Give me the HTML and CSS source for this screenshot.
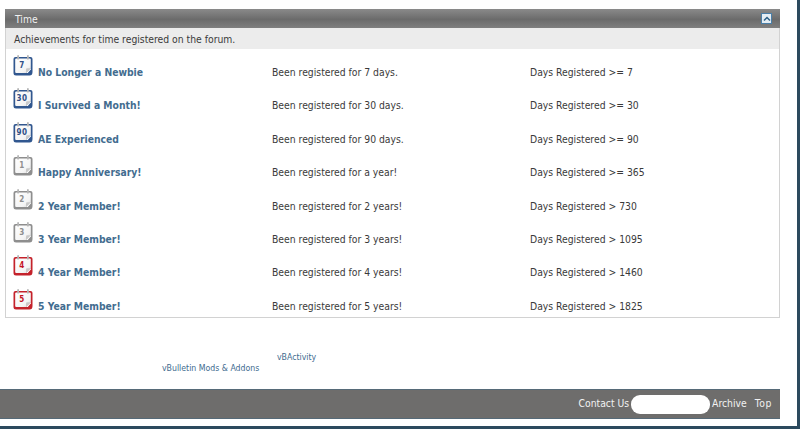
FILE: index.html
```html
<!DOCTYPE html>
<html lang="en">
<head>
<meta charset="utf-8">
<title>Achievements</title>
<link rel="stylesheet" href="styles.css">
</head>
<body>
<svg class="defs" width="0" height="0" aria-hidden="true">
  <defs>
    <linearGradient id="face" x1="0" y1="0" x2="1" y2="1">
      <stop offset="0" stop-color="#fff"/>
      <stop offset=".7" stop-color="#f4f4f4"/>
      <stop offset="1" stop-color="#d8d8d8"/>
    </linearGradient>
  </defs>
  <symbol id="cal" viewBox="0 0 20 21">
    <path d="M2.500 2H17.500Q19.500 2 19.500 4V17Q19.500 20.500 16.500 20.500H3Q.5 20.500 .5 18V4Q.5 2 2.500 2Z" fill="currentColor"/>
    <path d="M3.200 3.400H16.800Q17.800 3.400 17.800 4.400V13L13 18H3.200Q2.200 18 2.200 17V4.400Q2.200 3.400 3.200 3.400Z" fill="url(#face)"/>
    <path d="M13 18L17.800 13V14.500L14.800 18Z" fill="#fff"/>
    <path d="M13 18V14.400Q13 13.200 14.200 13.200H17.600Z" fill="#c9c9c9"/>
    <rect x="4.200" y="0" width="1.800" height="4.600" rx=".9" fill="#b5b5b5"/>
    <rect x="14" y="0" width="1.800" height="4.600" rx=".9" fill="#b5b5b5"/>
  </symbol>
</svg>
<main class="page">
  <section class="block">
    <header class="block-head">
      <h2 class="block-title">Time</h2>
      <span class="collapse"><svg viewBox="0 0 10 8" width="8" height="6"><path d="M1 6L5 2L9 6" fill="none" stroke="#2a5f86" stroke-width="2"/></svg></span>
    </header>
    <p class="block-desc">Achievements for time registered on the forum.</p>
    <div class="rows">
      <div class="row"><div class="name blue"><span class="badge"><svg class="cal"><use href="#cal"/></svg><b class="num">7</b></span><a href="#">No Longer a Newbie</a></div><div>Been registered for 7 days.</div><div>Days Registered &gt;= 7</div></div>
      <div class="row"><div class="name blue"><span class="badge"><svg class="cal"><use href="#cal"/></svg><b class="num">30</b></span><a href="#">I Survived a Month!</a></div><div>Been registered for 30 days.</div><div>Days Registered &gt;= 30</div></div>
      <div class="row"><div class="name blue"><span class="badge"><svg class="cal"><use href="#cal"/></svg><b class="num">90</b></span><a href="#">AE Experienced</a></div><div>Been registered for 90 days.</div><div>Days Registered &gt;= 90</div></div>
      <div class="row"><div class="name grey"><span class="badge"><svg class="cal"><use href="#cal"/></svg><b class="num">1</b></span><a href="#">Happy Anniversary!</a></div><div>Been registered for a year!</div><div>Days Registered &gt;= 365</div></div>
      <div class="row"><div class="name grey"><span class="badge"><svg class="cal"><use href="#cal"/></svg><b class="num">2</b></span><a href="#">2 Year Member!</a></div><div>Been registered for 2 years!</div><div>Days Registered &gt; 730</div></div>
      <div class="row"><div class="name grey"><span class="badge"><svg class="cal"><use href="#cal"/></svg><b class="num">3</b></span><a href="#">3 Year Member!</a></div><div>Been registered for 3 years!</div><div>Days Registered &gt; 1095</div></div>
      <div class="row"><div class="name red"><span class="badge"><svg class="cal"><use href="#cal"/></svg><b class="num">4</b></span><a href="#">4 Year Member!</a></div><div>Been registered for 4 years!</div><div>Days Registered &gt; 1460</div></div>
      <div class="row"><div class="name red"><span class="badge"><svg class="cal"><use href="#cal"/></svg><b class="num">5</b></span><a href="#">5 Year Member!</a></div><div>Been registered for 5 years!</div><div>Days Registered &gt; 1825</div></div>
    </div>
  </section>
  <div class="credits">
    <a class="credit-main" href="#">vBulletin Mods &amp; Addons</a>
    <a class="credit-side" href="#">vBActivity</a>
  </div>
  <footer class="foot">
    <a href="#">Contact Us</a>
    <span class="pill"></span>
    <a href="#">Archive</a>
    <a class="top" href="#">Top</a>
  </footer>
</main>
</body>
</html>
```
FILE: styles.css
```css
* { box-sizing: border-box; }
html, body { margin: 0; height: 429px; overflow: hidden; background: #fff; }
body {
  font-family: "DejaVu Sans Condensed", "DejaVu Sans", sans-serif;
  font-stretch: condensed;
  font-size: 10.3px;
  color: #3a3a3a;
  border-right: 3px solid #2c4a5e;
  border-bottom: 3px solid #2c4a5e;
}
.defs { position: absolute; }
.page { width: 780px; padding-top: 9px; }
a { color: #426c8f; text-decoration: none; }
.block { margin-left: 5px; border: 1px solid #d2d2d2; border-top: 0; height: 309px; }
.block-head {
  height: 19px;
  margin: 0 -1px;
  padding: 0 8px 0 10px;
  display: flex; align-items: center; justify-content: space-between;
  background: linear-gradient(#8a8a8a, #6b6b6b 55%, #7f7f7f);
}
.block-title { margin: 0; font-size: 10.3px; font-weight: 400; color: #f2f2f2; }
.collapse {
  width: 11px; height: 11px; background: #e4edf4; border: 1px solid #4a7fa8;
  display: flex; align-items: center; justify-content: center;
}
.block-desc {
  margin: 0; height: 21px; padding: 0 8px;
  display: flex; align-items: center;
  background: #ececec; font-size: 10.3px; color: #3a3a3a;
}
.row {
  display: grid;
  grid-template-columns: 258px 258px 1fr;
  height: 33.4px;
  padding: 0 0 3.4px 8px;
  align-items: end;
  line-height: 14px;
}
.name { display: flex; align-items: flex-end; font-weight: 700; font-size: 10.3px; }
.name a { margin-left: 5px; color: #426c8f; }
.badge { position: relative; display: block; flex: none; width: 20px; height: 21px; margin: 0 0 3px -1px; }
.cal { display: block; width: 20px; height: 21px; }
.blue .cal { color: #31578f; }
.grey .cal { color: #8e8e8e; }
.red .cal { color: #c4222b; }
.num {
  position: absolute; left: 0; right: 2px; top: 6px;
  text-align: center; font-size: 8px; line-height: 10px;
  font-stretch: normal; letter-spacing: .6px;
}
.blue .num { color: #2f4f86; }
.grey .num { color: #8e8e8e; }
.red .num { color: #c4121f; }
.credits { position: relative; height: 71px; font-size: 8.7px; }
.credit-main { position: absolute; left: 162px; top: 45px; }
.credit-side { position: absolute; left: 277px; top: 34px; }
.foot {
  height: 30px;
  padding: 0 8px 3px 0;
  background: #6e6d6c;
  border-top: 1px solid #566a78;
  border-bottom: 1px solid #566a78;
  display: flex; align-items: center; justify-content: flex-end;
  gap: 2px;
}
.foot a { color: #f2f2f2; font-size: 10.3px; }
.pill { width: 79px; height: 19px; margin-top: 3px; background: #fff; border-radius: 9px; }
.foot .top { margin-left: 6px; letter-spacing: .6px; }
```
